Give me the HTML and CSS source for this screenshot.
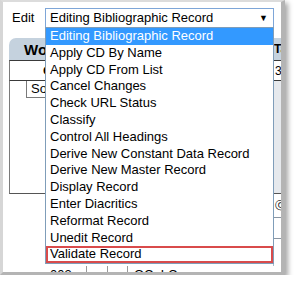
FILE: index.html
```html
<!DOCTYPE html>
<html>
<head>
<meta charset="utf-8">
<link rel="stylesheet" href="styles.css">
</head>
<body>
<div class="panel">
  <div class="edit-row">
    <span class="edit-label">Edit</span>
    <div class="select">
      <span class="select-text">Editing Bibliographic Record</span>
      <span class="select-arrow">▼</span>
    </div>
  </div>
  <div class="window">
    <div class="win-head">
      <span class="win-title">Workform</span>
      <span class="win-tag">Tag</span>
    </div>
    <div class="grid-row1">
      <span class="col-left">Control</span>
      <span class="col-right">35</span>
    </div>
    <div class="grid-body">
      <div class="body-left"><div class="so-box"><span class="so-text">Source</span></div></div>
      <div class="body-right"></div>
    </div>
    <div class="lower">
      <div class="lower-left"></div>
      <div class="lower-right">
        <div class="lr-cell lr-a">ⓒ</div>
        <div class="lr-cell lr-b"></div>
      </div>
    </div>
    <div class="row003">
      <span class="c003">003</span>
      <span class="cbox c1"></span>
      <span class="cbox c2"></span>
      <span class="cval">OCoLC</span>
    </div>
  </div>
  <ul class="dropdown">
    <li class="item selected">Editing Bibliographic Record</li>
    <li class="item">Apply CD By Name</li>
    <li class="item">Apply CD From List</li>
    <li class="item">Cancel Changes</li>
    <li class="item">Check URL Status</li>
    <li class="item">Classify</li>
    <li class="item">Control All Headings</li>
    <li class="item">Derive New Constant Data Record</li>
    <li class="item">Derive New Master Record</li>
    <li class="item">Display Record</li>
    <li class="item">Enter Diacritics</li>
    <li class="item">Reformat Record</li>
    <li class="item">Unedit Record</li>
    <li class="item marked">Validate Record</li>
  </ul>
</div>
</body>
</html>
```
FILE: styles.css
```css
html, body {
  margin: 0;
  padding: 0;
  background: #ffffff;
}
body {
  font-family: "Liberation Sans", Arial, sans-serif;
  font-size: 13px;
  color: #000;
}
.panel {
  position: relative;
  box-sizing: border-box;
  width: 285px;
  height: 275px;
  background: #fff;
  border-left: 3px solid #d6d6d6;
  border-top: 2px solid #dcdcdc;
  border-right: 4px solid #b4b4b4;
  border-bottom: 3px solid #b4b4b4;
  box-shadow: 3px 3px 5px rgba(0, 0, 0, 0.35);
  overflow: hidden;
}
.edit-row {
  display: flex;
  align-items: center;
  padding: 6px 0 0 9px;
}
.edit-label {
  width: 33px;
  line-height: 20px;
}
.select {
  box-sizing: border-box;
  width: 229px;
  height: 20px;
  border: 1px solid #7ea6d8;
  display: flex;
  align-items: center;
  justify-content: space-between;
  padding: 0 5px 0 4px;
}
.select-text {
  line-height: 18px;
}
.select-arrow {
  font-size: 9px;
  line-height: 18px;
}
.window {
  margin: 10px -40px 0 6px;
}
.win-head {
  height: 22px;
  background: #c5d2de;
  border-radius: 7px 7px 0 0;
  display: flex;
  align-items: center;
  font-weight: bold;
}
.win-title {
  flex: 0 0 36px;
  margin-right: 228px;
  padding-left: 15px;
  box-sizing: border-box;
  font-size: 15px;
  overflow: hidden;
  white-space: nowrap;
}
.win-tag {
  font-size: 12px;
  padding-left: 1px;
}
.grid-row1 {
  display: flex;
  height: 19px;
  border-top: 1px solid #3a3a3a;
  border-bottom: 1px solid #3a3a3a;
  border-left: 1px solid #7a7a7a;
  align-items: center;
}
.col-left {
  flex: 0 0 35px;
  margin-right: 228px;
  padding-left: 33px;
  box-sizing: border-box;
  font-weight: bold;
  font-size: 13px;
  overflow: hidden;
  white-space: nowrap;
}
.col-right {
  border-left: 1px solid #9aa9b8;
  padding-left: 1px;
  font-size: 12px;
}
.grid-body {
  display: flex;
  height: 112px;
  border-left: 1px solid #7a7a7a;
  border-bottom: 1px solid #555;
}
.body-left {
  flex: 0 0 263px;
}
.so-box {
  margin: 0 0 0 16px;
  height: 17px;
  box-sizing: border-box;
  border: 1px solid #7a7a7a;
  border-top: none;
  padding-left: 4px;
  line-height: 16px;
}
.so-text {
  display: inline-block;
  width: 15px;
  overflow: hidden;
  white-space: nowrap;
  vertical-align: top;
}
.body-right {
  flex: 1;
  background: #e6e9ed;
  border-left: 1px solid #a9b8c8;
}
.lower {
  display: flex;
  height: 72px;
}
.lower-left {
  flex: 0 0 264px;
}
.lower-right {
  flex: 1;
  border-left: 1px solid #a9b8c8;
}
.lr-cell {
  box-sizing: border-box;
  border-bottom: 1px solid #8a96a3;
}
.lr-a {
  height: 24px;
  font-size: 11px;
  line-height: 22px;
  padding-left: 1px;
}
.lr-b {
  height: 21px;
}
.row003 {
  display: flex;
  align-items: flex-start;
  height: 20px;
}
.c003 {
  width: 78px;
  padding-left: 41px;
  box-sizing: border-box;
  border-right: 1px solid #999;
  height: 20px;
  line-height: 18px;
}
.cbox {
  height: 20px;
  border-right: 1px solid #999;
}
.c1 { width: 20px; }
.c2 { width: 19px; }
.cval {
  padding-left: 6px;
  line-height: 18px;
}
.dropdown {
  position: absolute;
  left: 42px;
  top: 25px;
  box-sizing: border-box;
  width: 229px;
  margin: 0;
  padding: 0;
  list-style: none;
  background: #fff;
  border: 1px solid #7f9db9;
}
.item {
  height: 16.8px;
  line-height: 16.8px;
  padding-left: 4px;
  white-space: nowrap;
}
.item.selected {
  background: #3399ff;
  color: #fff;
}
.item.marked {
  box-shadow: inset 0 0 0 2px #d94b4b;
}
```
